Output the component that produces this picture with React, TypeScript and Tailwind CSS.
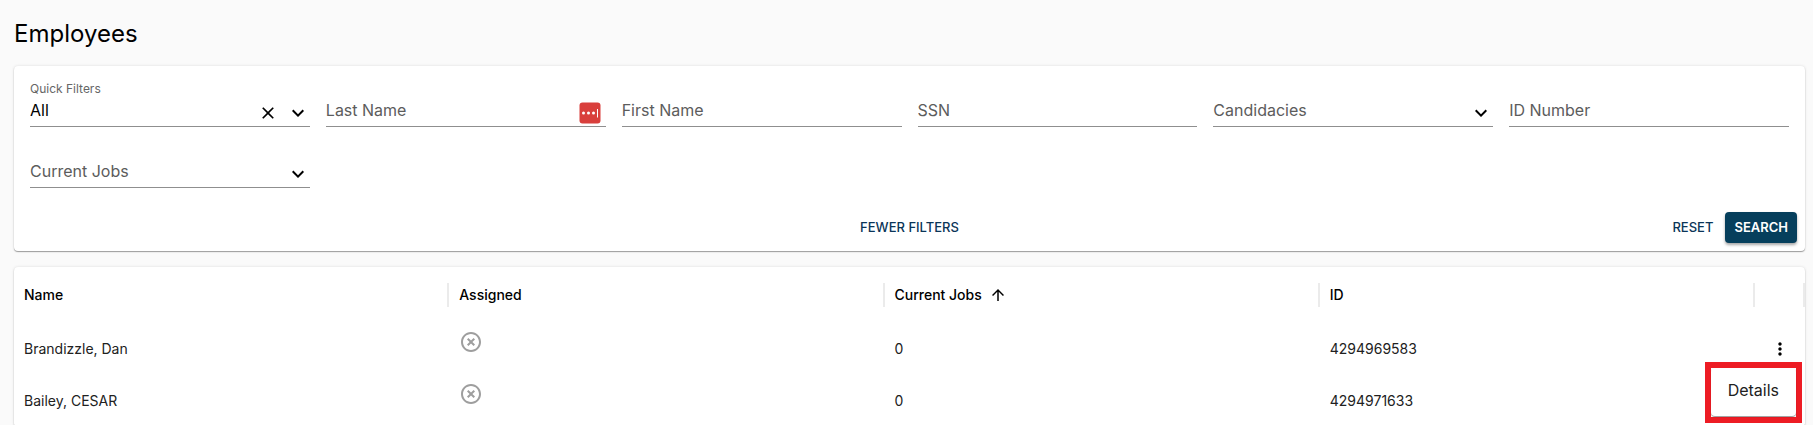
import { useState } from 'react';
import { MdArrowUpward, MdClose, MdHighlightOff, MdKeyboardArrowDown, MdMoreVert } from 'react-icons/md';

// ============================================================
// TYPES
// ============================================================
interface Employee {
  id: string;
  name: string;
  currentJobs: number;
}

interface FieldProps {
  id: string;
  label: string;
}

interface SelectFieldProps extends FieldProps {
  options: string[];
  /** Initial value; the label floats above the field when there is one */
  initial?: string;
}

const EMPLOYEES: Employee[] = [
  { id: '4294969583', name: 'Brandizzle, Dan', currentJobs: 0 },
  { id: '4294971633', name: 'Bailey, CESAR', currentJobs: 0 },
];

const labelClass = 'h-3 text-xs leading-[14px] text-[#666666]';

const controlClass =
  'h-8 w-full min-w-0 flex-1 appearance-none bg-transparent text-base outline-none placeholder:text-[#5c5c5c] placeholder:opacity-100';

// ============================================================
// FIELDS
// ============================================================
function TextField({ id, label, children }: FieldProps & { children?: React.ReactNode }) {
  return (
    <div className="flex flex-col">
      <label htmlFor={id} className={`${labelClass} invisible`}>{label}</label>
      <div className="flex items-center border-b border-[#8f8f8f]">
        <input id={id} type="text" placeholder={label} className={controlClass} />
        {children}
      </div>
    </div>
  );
}

function SelectField({ id, label, options, initial = '' }: SelectFieldProps) {
  const [value, setValue] = useState(initial);

  return (
    <div className="flex flex-col">
      <label htmlFor={id} className={`${labelClass} ${value ? '' : 'invisible'}`}>
        {label}
      </label>
      <div className="relative flex items-center border-b border-[#8f8f8f]">
        <select
          id={id}
          value={value}
          onChange={(e) => setValue(e.target.value)}
          className={`${controlClass} ${value ? 'text-black' : 'text-[#5c5c5c]'}`}
        >
          <option value="">{label}</option>
          {options.map((option) => (
            <option key={option}>{option}</option>
          ))}
        </select>
        <div className="pointer-events-none absolute right-0 flex items-center gap-2 pt-1.5">
          {value && (
            <button
              type="button"
              aria-label="Clear"
              onClick={() => setValue('')}
              className="pointer-events-auto"
            >
              <MdClose size={20} />
            </button>
          )}
          <MdKeyboardArrowDown size={24} />
        </div>
      </div>
    </div>
  );
}

/** Password manager badge shown inside a text box */
function VaultBadge() {
  return (
    <svg width="22" height="22" viewBox="0 0 22 22" className="mt-1.5 mr-[5px] shrink-0" aria-hidden="true">
      <rect x="0.5" y="0.5" width="21" height="21" rx="3" fill="#d93f3c" />
      <circle cx="4.5" cy="11" r="1.5" fill="#fff" />
      <circle cx="9.5" cy="11" r="1.5" fill="#fff" />
      <circle cx="14.5" cy="11" r="1.5" fill="#fff" />
      <rect x="18" y="7" width="1" height="8.5" fill="#fff" />
    </svg>
  );
}

// ============================================================
// FILTERS
// ============================================================
function Filters() {
  return (
    <form
      onSubmit={(e) => e.preventDefault()}
      className="rounded bg-white px-4 pt-4 pb-2 shadow-[0_1px_1px_rgba(0,0,0,0.35),0_0_3px_rgba(0,0,0,0.12)]"
    >
      <div className="grid grid-cols-6 gap-4">
        <SelectField id="quick" label="Quick Filters" options={['All', 'Assigned']} initial="All" />
        <TextField id="last" label="Last Name">
          <VaultBadge />
        </TextField>
        <TextField id="first" label="First Name" />
        <TextField id="ssn" label="SSN" />
        <SelectField id="candidacies" label="Candidacies" options={['Active', 'Closed']} />
        <TextField id="number" label="ID Number" />
        <SelectField id="jobs" label="Current Jobs" options={['0', '1']} />
      </div>
      <div className="mt-6 grid grid-cols-3 items-center text-[13px] font-medium text-[#0b3558]">
        <span />
        <button type="button" className="justify-self-center">FEWER FILTERS</button>
        <div className="-mr-2 flex items-center gap-3 justify-self-end">
          <button type="reset">RESET</button>
          <button
            type="submit"
            className="h-[31px] rounded bg-[#063f5c] px-[9px] font-semibold text-white shadow-[0_2px_3px_rgba(0,0,0,0.35)]"
          >
            SEARCH
          </button>
        </div>
      </div>
    </form>
  );
}

// ============================================================
// TABLE
// ============================================================
function HeaderCell({ children }: { children?: React.ReactNode }) {
  return (
    <div className="flex h-6 items-center gap-[7px] border-r-2 border-[#ebebeb] pl-2.5">{children}</div>
  );
}

function EmployeeTable() {
  return (
    <div className="rounded bg-white shadow-[0_1px_1px_rgba(0,0,0,0.35),0_0_3px_rgba(0,0,0,0.12)]">
      <table className="w-full table-fixed text-left text-sm text-[#212121]">
        <thead>
          <tr className="h-14 text-black">
            <th className="font-medium"><HeaderCell>Name</HeaderCell></th>
            <th className="font-medium"><HeaderCell>Assigned</HeaderCell></th>
            <th className="font-medium">
              <HeaderCell>
                Current Jobs
                <MdArrowUpward size={18} />
              </HeaderCell>
            </th>
            <th className="font-medium"><HeaderCell>ID</HeaderCell></th>
            <th className="w-[50px]"><HeaderCell /></th>
          </tr>
        </thead>
        <tbody>
          {EMPLOYEES.map((employee, index) => (
            <tr key={employee.id} className="h-13">
              <td className="px-2.5">{employee.name}</td>
              <td className="px-2.5 pb-3.5">
                <MdHighlightOff size={24} className="text-[#9e9e9e]" title="Not assigned" />
              </td>
              <td className="px-2.5">{employee.currentJobs}</td>
              <td className="px-2.5">{employee.id}</td>
              <td>
                {index === 0 && (
                  <div className="relative flex justify-center">
                    <button type="button" aria-label="Actions" className="text-black">
                      <MdMoreVert size={20} />
                    </button>
                    {/* Row menu */}
                    <div className="absolute top-[23px] right-[3px] z-10 border-6 border-[#ed1c24] bg-white">
                      <button
                        type="button"
                        className="mb-px block h-12 rounded bg-white px-[17px] pb-1 text-base shadow-[0_1px_1px_rgba(0,0,0,0.4)]"
                      >
                        Details
                      </button>
                    </div>
                  </div>
                )}
              </td>
            </tr>
          ))}
        </tbody>
      </table>
    </div>
  );
}

export default function App() {
  return (
    <main className="flex h-screen flex-col gap-4 overflow-hidden bg-[#fafafa] pr-2 pl-3.5 font-['Inter',sans-serif]">
      <h1 className="-mb-4 pt-[18px] pb-4 text-2xl">Employees</h1>
      <Filters />
      <EmployeeTable />
    </main>
  );
}
